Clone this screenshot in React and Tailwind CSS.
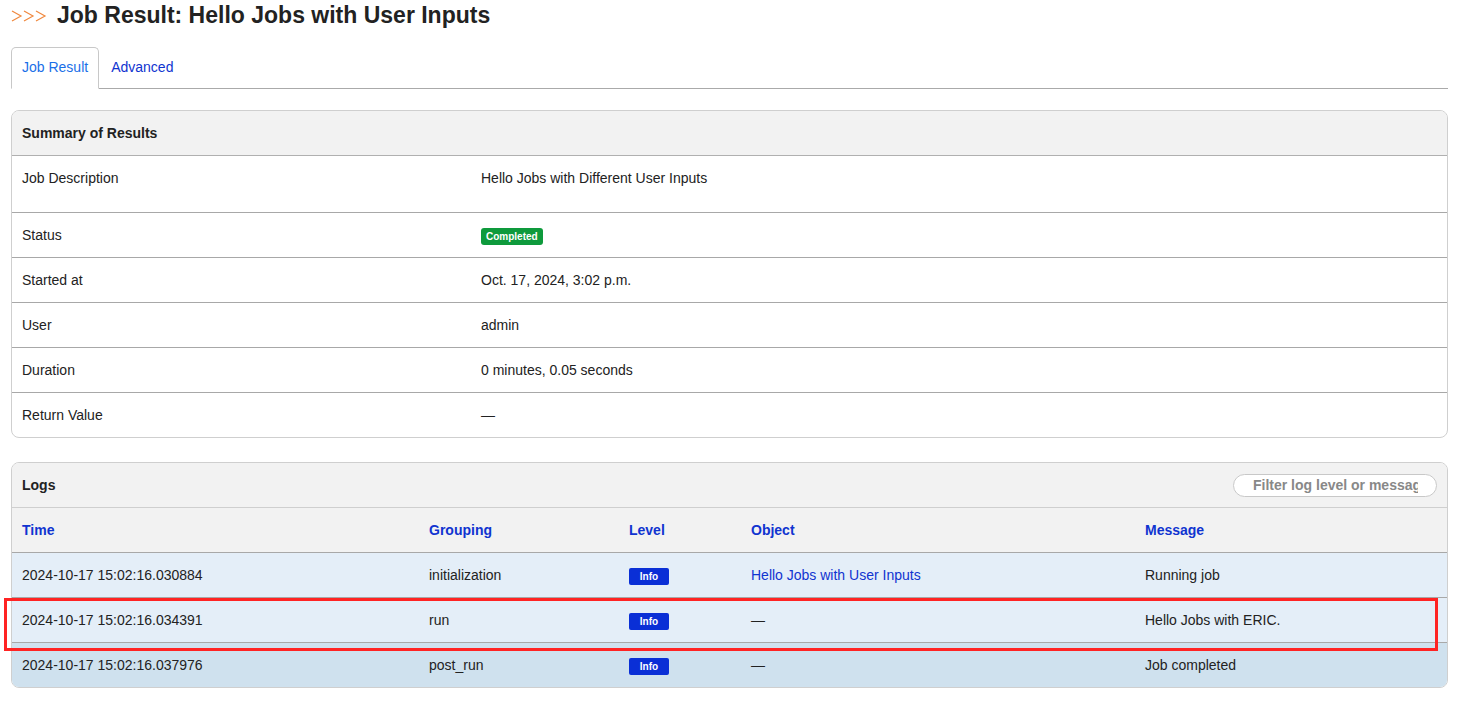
import React from 'react';

const summary = [
  { label: 'Job Description', value: 'Hello Jobs with Different User Inputs', tall: true },
  { label: 'Status', badge: 'Completed' },
  { label: 'Started at', value: 'Oct. 17, 2024, 3:02 p.m.' },
  { label: 'User', value: 'admin' },
  { label: 'Duration', value: '0 minutes, 0.05 seconds' },
  { label: 'Return Value', value: '—' },
];

const logs = [
  { time: '2024-10-17 15:02:16.030884', grouping: 'initialization', object: 'Hello Jobs with User Inputs', message: 'Running job' },
  { time: '2024-10-17 15:02:16.034391', grouping: 'run', object: null, message: 'Hello Jobs with ERIC.' },
  { time: '2024-10-17 15:02:16.037976', grouping: 'post_run', object: null, message: 'Job completed', hover: true },
];

function Chevrons() {
  return (
    <svg width="36" height="12" viewBox="0 0 36 12" fill="none" stroke="#f0883e" strokeWidth="1.2">
      <polyline points="1,1 10,6 1,11" />
      <polyline points="13,1 22,6 13,11" />
      <polyline points="25,1 34,6 25,11" />
    </svg>
  );
}

const cols = 'grid grid-cols-[407px_200px_122px_394px_1fr]';

export default function App() {
  return (
    <div className="relative min-h-[708px] bg-white pl-[11px] pr-[16px] text-[14px] text-[#222]" style={{ fontFamily: '"Liberation Sans", Arial, sans-serif' }}>
      {/* Title */}
      <div className="flex h-[31px] items-center gap-[10px]">
        <Chevrons />
        <h1 className="text-[23px] font-bold text-[#222]">Job Result: Hello Jobs with User Inputs</h1>
      </div>

      {/* Tabs */}
      <div className="mt-[16px] flex items-end border-b border-[#aaa]">
        <div className="-mb-px flex h-[42px] items-center rounded-t-[5px] border border-b-white border-[#c8c8c8] bg-white px-[10px] pb-[2px] text-[#1a6fe8]">
          Job Result
        </div>
        <div className="flex h-[41px] items-center px-[12px] pb-[1px] text-[#1034d0]">Advanced</div>
      </div>

      {/* Summary */}
      <div className="mt-[21px] overflow-hidden rounded-[8px] border border-[#cfcfcf]">
        <div className="flex h-[45px] items-center border-b border-[#b0b0b0] bg-[#f2f2f2] px-[10px] font-bold">Summary of Results</div>
        {summary.map((r, i) => (
          <div
            key={r.label}
            className={`grid grid-cols-[459px_1fr] px-[10px] ${i > 0 ? 'border-t border-[#a8a8a8]' : ''} ${r.tall ? 'h-[56px] pt-[12px]' : 'h-[45px] items-center'}`}
          >
            <div>{r.label}</div>
            <div>
              {r.badge ? (
                <span className="inline-flex h-[17px] items-center rounded-[3px] bg-[#0e9a3c] px-[5px] text-[10px] font-bold text-white">{r.badge}</span>
              ) : (
                r.value
              )}
            </div>
          </div>
        ))}
      </div>

      {/* Logs */}
      <div className="mt-[24px] overflow-hidden rounded-[8px] border border-[#cfcfcf]">
        <div className="flex h-[45px] items-center justify-between border-b border-[#cfcfcf] bg-[#f2f2f2] pl-[10px] pr-[10px]">
          <span className="font-bold">Logs</span>
          <input
            placeholder="Filter log level or message"
            className="h-[23px] w-[204px] rounded-full border border-[#c8c8c8] bg-white pl-[19px] pr-[18px] text-[14px] font-bold text-[#777] placeholder:text-[#888] outline-none"
          />
        </div>
        <div className={`${cols} h-[45px] items-center border-b border-[#a8a8a8] bg-[#f2f2f2] px-[10px] font-bold text-[#1034d0]`}>
          <div>Time</div>
          <div>Grouping</div>
          <div>Level</div>
          <div>Object</div>
          <div>Message</div>
        </div>
        {logs.map((l, i) => (
          <div
            key={l.time}
            className={`${cols} items-center px-[10px] ${i > 0 ? 'h-[45px] border-t border-[#a8a8a8]' : 'h-[44px]'} ${l.hover ? 'bg-[#cfe1ee]' : 'bg-[#e4eef8]'}`}
          >
            <div>{l.time}</div>
            <div>{l.grouping}</div>
            <div>
              <span className="inline-flex h-[17px] w-[40px] items-center justify-center rounded-[2px] bg-[#0a2fd6] text-[10px] font-bold text-white">Info</span>
            </div>
            <div className={l.object ? 'text-[#1034d0]' : ''}>{l.object || '—'}</div>
            <div>{l.message}</div>
          </div>
        ))}
      </div>

      {/* Highlight annotation */}
      <div className="pointer-events-none absolute left-[4px] top-[598px] h-[53px] w-[1434px] border-[3px] border-[#ff2323]" />
    </div>
  );
}
